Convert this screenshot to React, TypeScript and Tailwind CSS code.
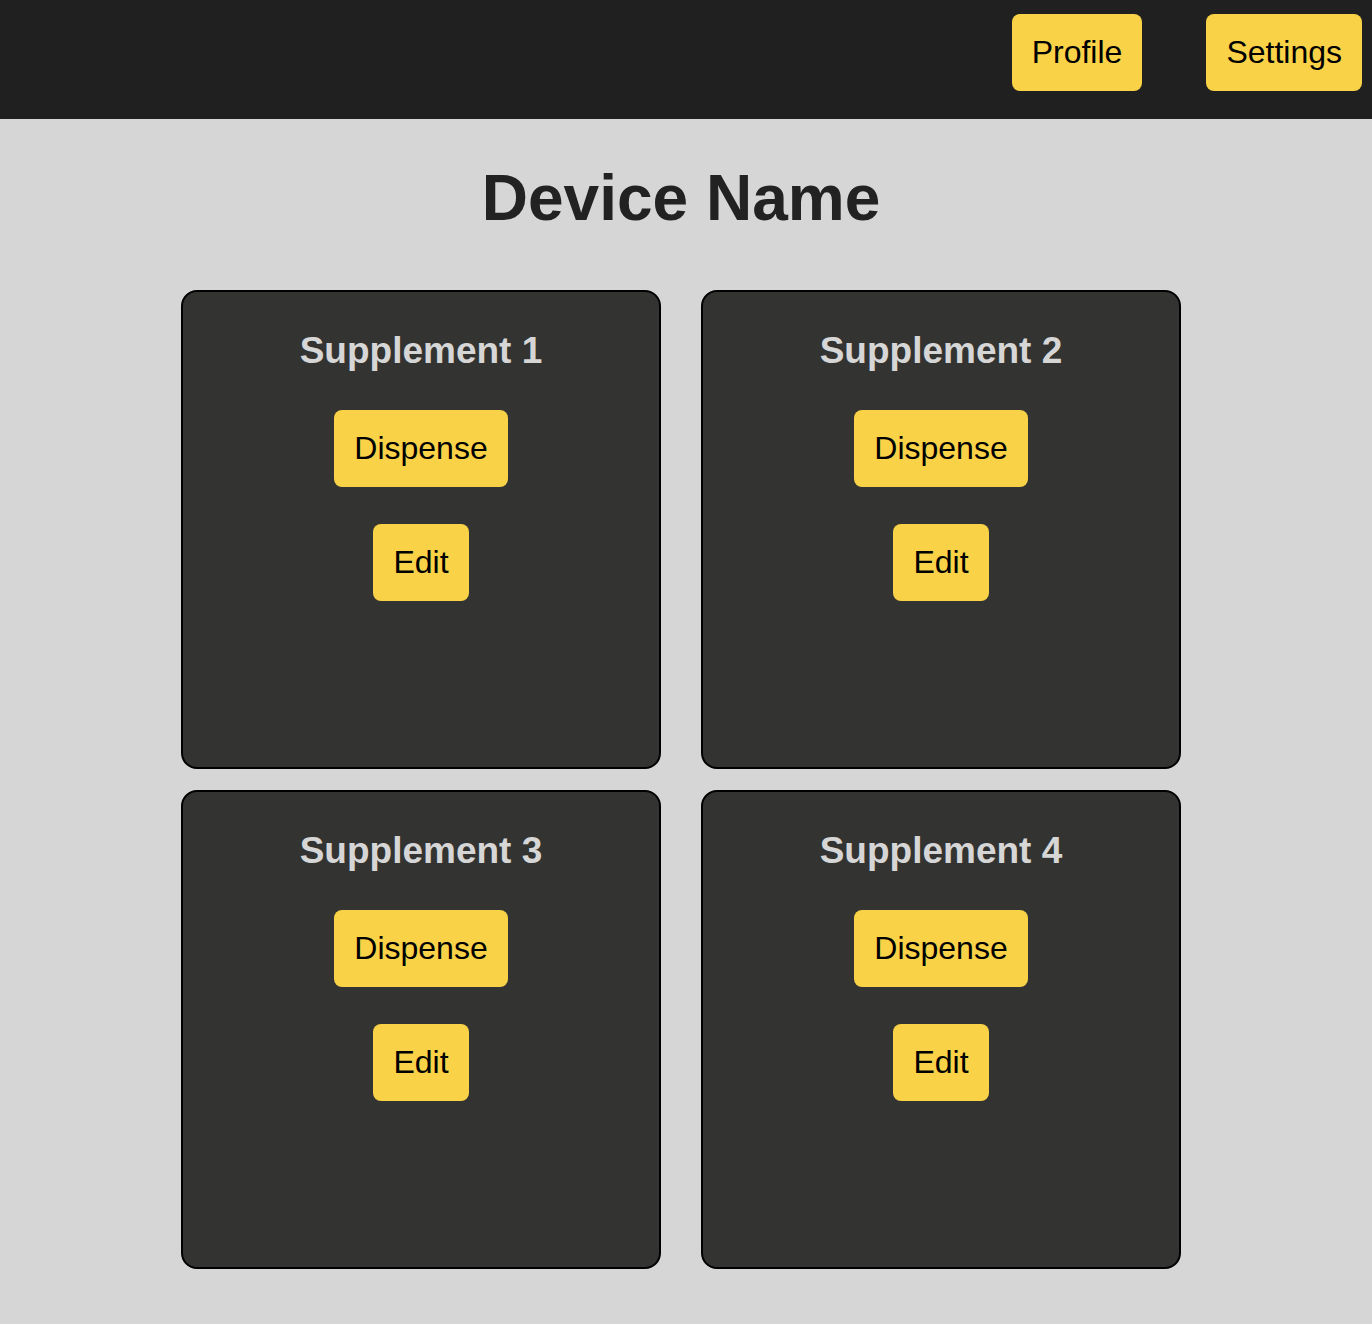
const supplements = ["Supplement 1", "Supplement 2", "Supplement 3", "Supplement 4"];

const btn =
  "rounded-lg bg-[#f9d247] px-5 py-5 text-[32px] leading-[37px] text-black";

const SupplementCard = ({ name }: { name: string }) => {
  return (
    <div className="flex h-[479px] w-[480px] flex-col items-center rounded-2xl border-2 border-black bg-[#333432] pt-[37px]">
      <h2 className="text-[37px] font-bold leading-[43px] text-[#d6d6d6]">
        {name}
      </h2>
      <button className={`${btn} mt-[38px]`}>Dispense</button>
      <button className={`${btn} mt-[37px]`}>Edit</button>
    </div>
  );
};

export default function App() {
  return (
    <div
      className="min-h-[1324px] bg-[#d6d6d6]"
      style={{ fontFamily: '"Liberation Sans", Arial, sans-serif' }}
    >
      <header className="flex h-[119px] items-start justify-end gap-16 bg-[#202020] pr-[10px] pt-[14px]">
        <button className={btn}>Profile</button>
        <button className={btn}>Settings</button>
      </header>
      <main className="flex flex-col items-center pr-[10px]">
        <h1 className="mt-[42px] text-[64px] font-bold leading-[74px] text-[#222222]">
          Device Name
        </h1>
        <div className="mt-[55px] grid grid-cols-2 gap-x-10 gap-y-[21px]">
          {supplements.map((s) => (
            <SupplementCard key={s} name={s} />
          ))}
        </div>
      </main>
    </div>
  );
}
